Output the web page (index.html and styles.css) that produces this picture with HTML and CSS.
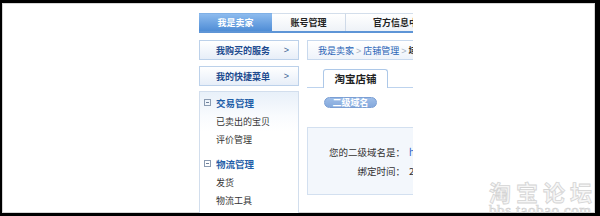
FILE: index.html
```
<!DOCTYPE html>
<html lang="zh-CN">
<head>
<meta charset="utf-8">
<title>我是卖家 - 二级域名</title>
<link rel="stylesheet" href="styles.css">
</head>
<body>
<div class="frame">
  <div class="app">
    <div class="topnav">
      <div class="tab tab-active">我是卖家</div>
      <div class="tab">账号管理</div>
      <div class="tab tab-wide">官方信息中心</div>
    </div>
    <div class="main">
      <div class="side">
        <div class="sbtn"><span>我购买的服务</span><span class="arr">&gt;</span></div>
        <div class="sbtn"><span>我的快捷菜单</span><span class="arr">&gt;</span></div>
        <div class="panel">
          <div class="group">
            <div class="ghead"><span class="fold"></span>交易管理</div>
            <div class="item">已卖出的宝贝</div>
            <div class="item">评价管理</div>
          </div>
          <div class="group group-next">
            <div class="ghead"><span class="fold"></span>物流管理</div>
            <div class="item">发货</div>
            <div class="item">物流工具</div>
          </div>
        </div>
      </div>
      <div class="content">
        <div class="crumb"><a>我是卖家</a><span class="sep">&gt;</span><a>店铺管理</a><span class="sep">&gt;</span><span class="cur">域名设置</span></div>
        <div class="subtabs"><div class="subtab">淘宝店铺</div></div>
        <div class="pillrow"><span class="pill">二级域名</span></div>
        <div class="infobox">
          <div class="lbl">您的二级域名是：</div><div class="val val-link">http://shop.taobao.com</div>
          <div class="lbl">绑定时间：</div><div class="val">2010-01-01</div>
        </div>
      </div>
    </div>
  </div>
  <div class="watermark">
    <div class="wm-cn">淘宝论坛</div>
    <div class="wm-en">bbs.taobao.com</div>
  </div>
</div>
</body>
</html>
```
FILE: styles.css
```
html, body {
  margin: 0;
  padding: 0;
  background: #000;
}
.frame {
  position: relative;
  width: 600px;
  height: 216px;
  box-sizing: border-box;
  border-style: solid;
  border-color: #000;
  border-width: 3px 5px 3px 2px;
  background: #fff;
  box-shadow: inset 0 0 0 1px #d6d6d6;
  overflow: hidden;
  font-family: "Noto Sans CJK SC", "Liberation Sans", sans-serif;
  font-size: 9px;
  color: #333;
}
.app {
  margin: 10px 0 0 197px;
  width: 214px;
  overflow: hidden;
  white-space: nowrap;
}
.topnav {
  display: flex;
  height: 18px;
  border-bottom: 2px solid #5e95d6;
}
.tab {
  flex: none;
  width: 74px;
  box-sizing: border-box;
  line-height: 17px;
  text-align: center;
  font-weight: bold;
  color: #222;
  background: linear-gradient(#ffffff, #eef2f7);
  border-top: 1px solid #d3deeb;
  border-right: 1px solid #cfdae8;
}
.tab-active {
  width: 73px;
  color: #fff;
  background: linear-gradient(#8dbbee, #4f8dd6);
  border-top-color: #7fb0e6;
  border-right: none;
}
.tab-wide {
  width: 108px;
  border-right: none;
}
.main {
  display: grid;
  grid-template-columns: 100px 106px;
  column-gap: 8px;
  margin-top: 7px;
}
.side {
  display: flex;
  flex-direction: column;
}
.sbtn {
  display: flex;
  justify-content: space-between;
  align-items: center;
  height: 20px;
  box-sizing: border-box;
  padding: 0 9px 0 16px;
  border: 1px solid #bcd1ea;
  background: linear-gradient(#ffffff, #e7eef8);
  color: #1e4b8f;
  font-weight: bold;
  margin-bottom: 6px;
}
.sbtn + .sbtn {
  margin-bottom: 5px;
}
.arr {
  font-family: "Liberation Sans", sans-serif;
  font-weight: normal;
  color: #3a5f94;
}
.panel {
  height: 140px;
  border: 1px solid #d2deed;
  border-bottom: none;
  background: linear-gradient(#e8f0f9 0, #f9fbfe 24px, #ffffff 40px);
  padding-left: 4px;
}
.group-next {
  margin-top: 4px;
}
.ghead {
  display: flex;
  align-items: center;
  height: 21px;
  color: #1f5ea8;
  font-weight: bold;
  font-size: 9.5px;
}
.fold {
  position: relative;
  width: 5px;
  height: 5px;
  border: 1px solid #8a9bb2;
  margin-right: 5px;
}
.fold::after {
  content: "";
  position: absolute;
  left: 1px;
  right: 1px;
  top: 2px;
  height: 1px;
  background: #6f829c;
}
.item {
  height: 18px;
  line-height: 18px;
  padding-left: 12px;
  color: #333;
}
.content {
  display: flex;
  flex-direction: column;
}
.crumb {
  height: 20px;
  line-height: 19px;
  box-sizing: border-box;
  width: 120px;
  padding-left: 10px;
  border: 1px solid #c8d9ee;
  background: linear-gradient(#ffffff, #eef3fa);
  color: #2a64b6;
}
.crumb a {
  color: #2a64b6;
}
.sep {
  color: #a7b4c4;
  margin: 0 2px;
  font-family: "Liberation Sans", sans-serif;
}
.cur {
  color: #333;
  font-weight: bold;
}
.subtabs {
  display: flex;
  margin-top: 9px;
  padding-left: 16px;
  border-bottom: 1px solid #bdd3ee;
  width: 120px;
}
.subtab {
  width: 65px;
  height: 19px;
  box-sizing: border-box;
  line-height: 18px;
  text-align: center;
  font-size: 10.5px;
  font-weight: bold;
  color: #222;
  border: 1px solid #adc8e8;
  border-bottom: none;
  border-radius: 3px 3px 0 0;
  background: #fff;
  margin-bottom: -1px;
}
.pillrow {
  margin-top: 8px;
  padding-left: 17px;
  height: 11px;
}
.pill {
  display: inline-block;
  width: 53px;
  height: 11px;
  box-sizing: border-box;
  line-height: 10px;
  text-align: center;
  border-radius: 6px;
  background: linear-gradient(#9dbde8, #85a9dc);
  border: 1px solid #7b9fd4;
  color: #fff;
  font-weight: bold;
  font-size: 9px;
}
.infobox {
  display: grid;
  grid-template-columns: 97px auto;
  column-gap: 4px;
  row-gap: 0;
  align-content: center;
  margin-top: 20px;
  height: 68px;
  box-sizing: border-box;
  width: 120px;
  border: 1px solid #d3e0f0;
  background: #f3f7fc;
  padding-top: 2px;
}
.lbl, .val {
  line-height: 19px;
  font-size: 9.5px;
}
.lbl {
  text-align: right;
  color: #333;
}
.val {
  color: #333;
}
.val-link {
  color: #2a64c8;
}
.watermark {
  position: absolute;
  left: 487px;
  top: 177px;
  width: 108px;
  text-align: left;
}
.wm-cn {
  font-size: 22px;
  font-weight: bold;
  letter-spacing: 5px;
  line-height: 23px;
  color: #f6f6f6;
  -webkit-text-stroke: 0.8px #d4d4d4;
}
.wm-en {
  font-family: "Liberation Serif", serif;
  font-size: 15px;
  line-height: 15px;
  letter-spacing: 0.6px;
  color: #f4f4f4;
  -webkit-text-stroke: 0.6px #d0d0d0;
}
```
